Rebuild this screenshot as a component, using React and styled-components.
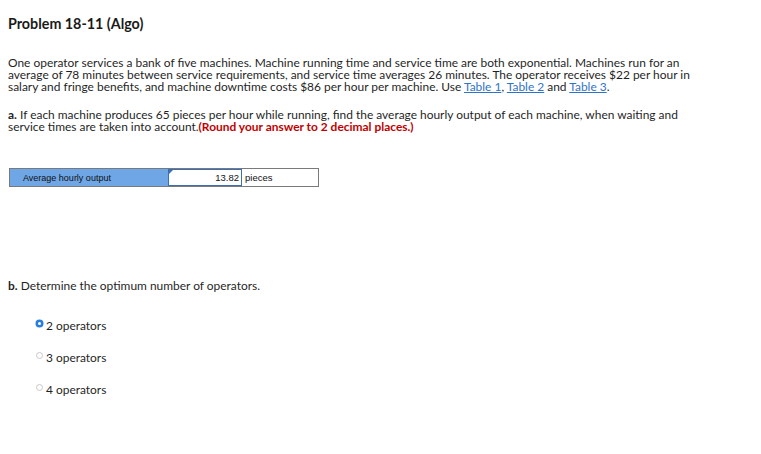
import React from "react";
import styled, { createGlobalStyle } from "styled-components";

const Global = createGlobalStyle`
  html, body { margin: 0; padding: 0; background: #fff; }
  body { font-family: Lato, "Open Sans", sans-serif; color: #1f1f1f; }
`;

const Page = styled.div`
  padding: 15px 8px 0 8px;
  width: 745px;
`;

const Title = styled.h1`
  margin: 0;
  font-size: 14.3px;
  font-weight: 700;
  line-height: 18px;
  color: #1a1a1a;
`;

const Para = styled.p`
  margin: ${(p) => p.$mt || 0}px 0 0 0;
  font-size: 11.95px;
  line-height: 12px;
`;

const Link = styled.a`
  color: #2f73c9;
  text-decoration: underline;
`;

const Red = styled.span`
  color: #c00000;
  font-weight: 700;
`;

const Table = styled.div`
  margin: 35px 0 0 1px;
  width: 308px;
  height: 17px;
  border: 1px solid #7a7a7a;
  display: flex;
  font-family: "Liberation Sans", Arial, sans-serif;
  font-size: 9px;
`;

const LabelCell = styled.div`
  width: 158px;
  background: #6fa6e6;
  display: flex;
  align-items: center;
  padding-left: 13px;
  box-sizing: border-box;
  color: #111;
`;

const InputCell = styled.div`
  position: relative;
  width: 74px;
  border: 1px solid #3b6fb5;
  box-sizing: border-box;
  display: flex;
  align-items: center;
  justify-content: flex-end;
  padding-right: 2px;
  color: #111;
  font-size: 9.5px;
`;

const Corner = styled.span`
  position: absolute;
  left: 0;
  top: 0;
  width: 0;
  height: 0;
  border-top: 4px solid #3b6fb5;
  border-right: 4px solid transparent;
`;

const UnitCell = styled.div`
  flex: 1;
  display: flex;
  align-items: center;
  padding-left: 3px;
  color: #111;
  font-size: 9.5px;
`;

const RadioList = styled.div`
  margin: 25px 0 0 28px;
  display: flex;
  flex-direction: column;
  gap: 16px;
`;

const RadioRow = styled.label`
  display: flex;
  align-items: center;
  height: 16px;
  font-size: 11.95px;
`;

const Dot = styled.span`
  width: 7px;
  height: 7px;
  border-radius: 50%;
  box-sizing: border-box;
  margin-right: 3px;
  margin-top: -4px;
  ${(p) =>
    p.$on
      ? `background: #fff; border: 2.5px solid #2a7ee0; box-shadow: 0 0 0 0.5px #2a7ee0;`
      : `background: #fff; border: 1px solid #c8c8c8;`}
`;

export default function App() {
  return (
    <>
      <Global />
      <Page>
        <Title>Problem 18-11 (Algo)</Title>
        <Para $mt={24}>
          One operator services a bank of five machines. Machine running time and service time are
          both exponential. Machines run for an
          <br />
          average of 78 minutes between service requirements, and service time averages 26 minutes.
          The operator receives $22 per hour in
          <br />
          salary and fringe benefits, and machine downtime costs $86 per hour per machine. Use{" "}
          <Link>Table 1</Link>, <Link>Table 2</Link> and <Link>Table 3</Link>.
        </Para>
        <Para $mt={16}>
          <b>a.</b> If each machine produces 65 pieces per hour while running, find the average
          hourly output of each machine, when waiting and
          <br />
          service times are taken into account.
          <Red>(Round your answer to 2 decimal places.)</Red>
        </Para>
        <Table>
          <LabelCell>Average hourly output</LabelCell>
          <InputCell>
            <Corner />
            13.82
          </InputCell>
          <UnitCell>pieces</UnitCell>
        </Table>
        <Para $mt={93}>
          <b>b.</b> Determine the optimum number of operators.
        </Para>
        <RadioList>
          <RadioRow>
            <Dot $on />2 operators
          </RadioRow>
          <RadioRow>
            <Dot />3 operators
          </RadioRow>
          <RadioRow>
            <Dot />4 operators
          </RadioRow>
        </RadioList>
      </Page>
    </>
  );
}
